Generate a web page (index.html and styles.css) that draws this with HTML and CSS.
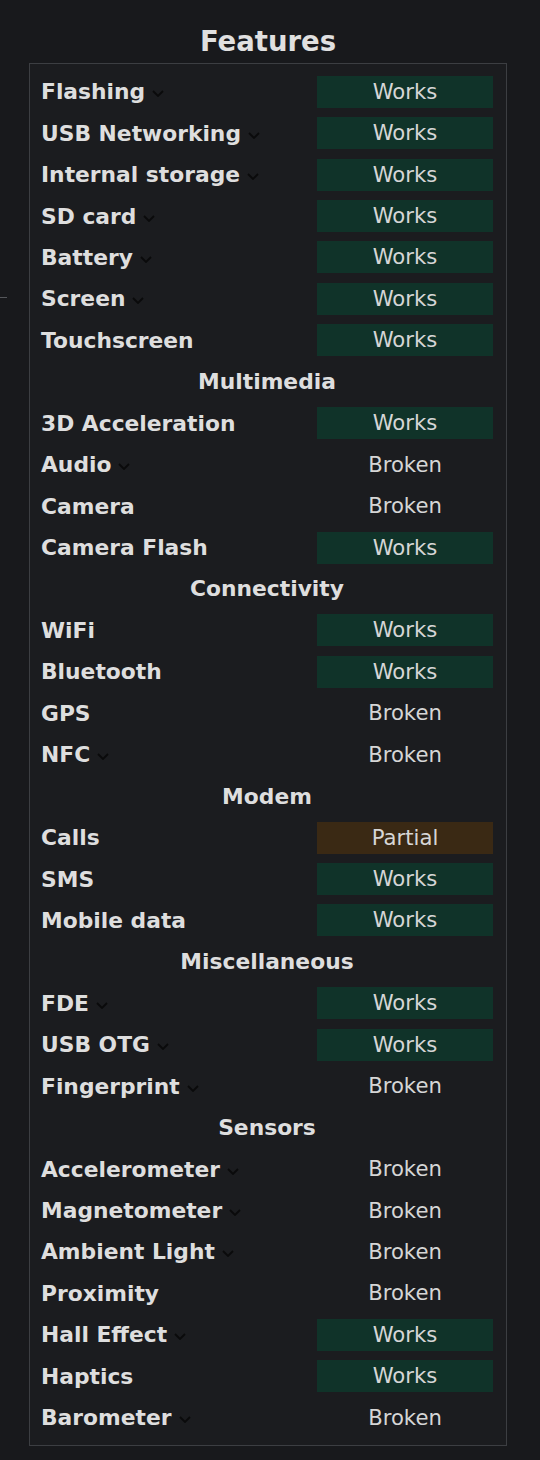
FILE: index.html
```html
<!DOCTYPE html>
<html>
<head>
<meta charset="utf-8">
<link rel="stylesheet" href="styles.css">
</head>
<body>
<span class="edge-tick"></span>
<main class="page">
  <h2 class="title">Features</h2>
  <div class="box">
    <div class="row"><span class="label">Flashing<svg class="chev" viewBox="0 0 12 7"><path d="M1 1l5 5 5-5"/></svg></span><span class="status works">Works</span></div>
    <div class="row"><span class="label">USB Networking<svg class="chev" viewBox="0 0 12 7"><path d="M1 1l5 5 5-5"/></svg></span><span class="status works">Works</span></div>
    <div class="row"><span class="label">Internal storage<svg class="chev" viewBox="0 0 12 7"><path d="M1 1l5 5 5-5"/></svg></span><span class="status works">Works</span></div>
    <div class="row"><span class="label">SD card<svg class="chev" viewBox="0 0 12 7"><path d="M1 1l5 5 5-5"/></svg></span><span class="status works">Works</span></div>
    <div class="row"><span class="label">Battery<svg class="chev" viewBox="0 0 12 7"><path d="M1 1l5 5 5-5"/></svg></span><span class="status works">Works</span></div>
    <div class="row"><span class="label">Screen<svg class="chev" viewBox="0 0 12 7"><path d="M1 1l5 5 5-5"/></svg></span><span class="status works">Works</span></div>
    <div class="row"><span class="label">Touchscreen</span><span class="status works">Works</span></div>
    <div class="row section">Multimedia</div>
    <div class="row"><span class="label">3D Acceleration</span><span class="status works">Works</span></div>
    <div class="row"><span class="label">Audio<svg class="chev" viewBox="0 0 12 7"><path d="M1 1l5 5 5-5"/></svg></span><span class="status">Broken</span></div>
    <div class="row"><span class="label">Camera</span><span class="status">Broken</span></div>
    <div class="row"><span class="label">Camera Flash</span><span class="status works">Works</span></div>
    <div class="row section">Connectivity</div>
    <div class="row"><span class="label">WiFi</span><span class="status works">Works</span></div>
    <div class="row"><span class="label">Bluetooth</span><span class="status works">Works</span></div>
    <div class="row"><span class="label">GPS</span><span class="status">Broken</span></div>
    <div class="row"><span class="label">NFC<svg class="chev" viewBox="0 0 12 7"><path d="M1 1l5 5 5-5"/></svg></span><span class="status">Broken</span></div>
    <div class="row section">Modem</div>
    <div class="row"><span class="label">Calls</span><span class="status partial">Partial</span></div>
    <div class="row"><span class="label">SMS</span><span class="status works">Works</span></div>
    <div class="row"><span class="label">Mobile data</span><span class="status works">Works</span></div>
    <div class="row section">Miscellaneous</div>
    <div class="row"><span class="label">FDE<svg class="chev" viewBox="0 0 12 7"><path d="M1 1l5 5 5-5"/></svg></span><span class="status works">Works</span></div>
    <div class="row"><span class="label">USB OTG<svg class="chev" viewBox="0 0 12 7"><path d="M1 1l5 5 5-5"/></svg></span><span class="status works">Works</span></div>
    <div class="row"><span class="label">Fingerprint<svg class="chev" viewBox="0 0 12 7"><path d="M1 1l5 5 5-5"/></svg></span><span class="status">Broken</span></div>
    <div class="row section">Sensors</div>
    <div class="row"><span class="label">Accelerometer<svg class="chev" viewBox="0 0 12 7"><path d="M1 1l5 5 5-5"/></svg></span><span class="status">Broken</span></div>
    <div class="row"><span class="label">Magnetometer<svg class="chev" viewBox="0 0 12 7"><path d="M1 1l5 5 5-5"/></svg></span><span class="status">Broken</span></div>
    <div class="row"><span class="label">Ambient Light<svg class="chev" viewBox="0 0 12 7"><path d="M1 1l5 5 5-5"/></svg></span><span class="status">Broken</span></div>
    <div class="row"><span class="label">Proximity</span><span class="status">Broken</span></div>
    <div class="row"><span class="label">Hall Effect<svg class="chev" viewBox="0 0 12 7"><path d="M1 1l5 5 5-5"/></svg></span><span class="status works">Works</span></div>
    <div class="row"><span class="label">Haptics</span><span class="status works">Works</span></div>
    <div class="row"><span class="label">Barometer<svg class="chev" viewBox="0 0 12 7"><path d="M1 1l5 5 5-5"/></svg></span><span class="status">Broken</span></div>
  </div>
</main>
</body>
</html>
```

FILE: styles.css
```css
html, body {
  margin: 0;
  padding: 0;
  background: #18191c;
}
body {
  font-family: "DejaVu Sans", sans-serif;
  color: #dcdcdc;
  position: relative;
  min-height: 1460px;
}
.edge-tick {
  position: absolute;
  left: 0;
  top: 297px;
  width: 7px;
  height: 1px;
  background: #55575b;
}
.page {
  padding: 23px 33px 0 29px;
}
.title {
  margin: 0;
  text-align: center;
  font-size: 27.5px;
  font-weight: bold;
  line-height: 36px;
  color: #e0e0e0;
}
.box {
  margin-top: 4px;
  border: 1px solid #3c3e42;
  background: #1b1c1f;
  padding: 7px 13px 7px 11px;
  display: grid;
  grid-auto-rows: 41.44px;
}
.row {
  display: flex;
  align-items: center;
  justify-content: space-between;
}
.label {
  font-weight: bold;
  font-size: 21.8px;
  display: flex;
  align-items: center;
  color: #dedede;
}
.chev {
  width: 12px;
  height: 7px;
  margin-left: 7px;
  margin-top: 4px;
  fill: none;
  stroke: #0a0a0b;
  stroke-width: 1.8;
}
.status {
  width: 176px;
  height: 32px;
  line-height: 32px;
  text-align: center;
  font-size: 21.2px;
  color: #d6d6d6;
}
.works {
  background: #103329;
}
.partial {
  background: #3a2914;
}
.section {
  justify-content: center;
  font-weight: bold;
  font-size: 21.8px;
  color: #dedede;
}
```
